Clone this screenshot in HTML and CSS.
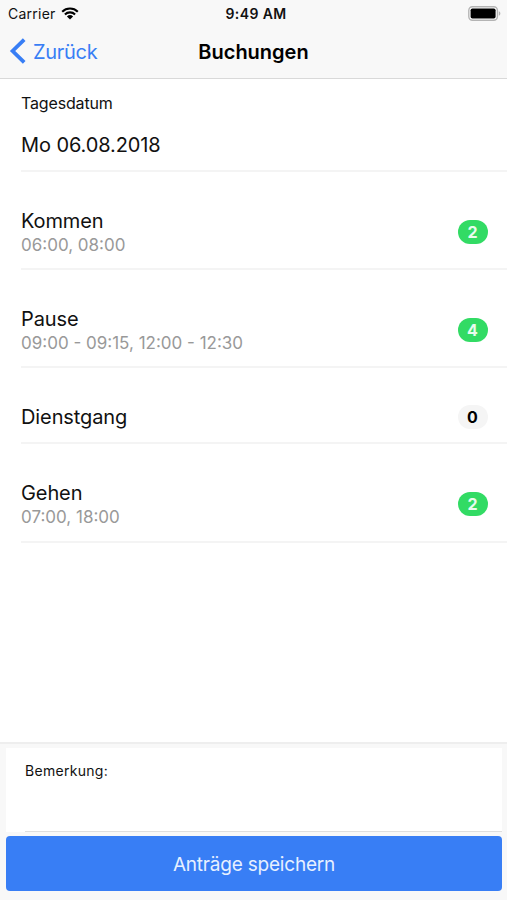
FILE: index.html
```
<!DOCTYPE html>
<html lang="de">
<head>
  <meta charset="UTF-8">
  <title>Buchungen</title>
  <meta name="viewport" content="width=device-width, initial-scale=1">
  <link rel="stylesheet" href="styles.css">
</head>
<body>
  <div class="page">
    <!-- Kopfbereich -->
    <header class="header">
      <div class="statusbar">
        <div class="carrier">
          <span class="carrier-name">Carrier</span>
          <svg class="wifi" width="18" height="13" viewBox="0 0 18 13">
            <path d="M1.2 4.7a11.2 11.2 0 0 1 15.6 0M3.9 7.5a7.3 7.3 0 0 1 10.2 0" fill="none" stroke="#000" stroke-width="2.1"/>
            <path d="M5.9 9.4a4.5 4.5 0 0 1 6.2 0L9 12.6z"/>
          </svg>
        </div>
        <span class="time">9:49 AM</span>
        <svg class="battery" width="33" height="16" viewBox="0 0 33 16">
          <rect x=".8" y=".8" width="28.6" height="13.4" rx="3.6" fill="#fff" stroke="#b4b4b4" stroke-width="1.4"/>
          <rect x="2.6" y="2.5" width="25" height="10" rx="1.8"/>
          <path d="M30.8 5.2v4.6q1.6-.6 1.6-2.3t-1.6-2.3z" fill="#b4b4b4"/>
        </svg>
      </div>
      <nav class="navbar">
        <a class="back" href="#">
          <svg class="chevron" width="17" height="26" viewBox="0 0 17 26">
            <path d="M15.2 1.6L3.6 13l11.6 11.4" fill="none" stroke="#387ef5" stroke-width="3.8"/>
          </svg>
          <span class="back-text">Zurück</span>
        </a>
        <h1 class="title">Buchungen</h1>
      </nav>
    </header>

    <!-- Liste der Buchungen -->
    <main class="list">
      <div class="item item-date">
        <label class="date-label">Tagesdatum</label>
        <div class="item-title date-value">Mo 06.08.2018</div>
      </div>
      <div class="item">
        <div>
          <h2 class="item-title">Kommen</h2>
          <p class="item-note">06:00, 08:00</p>
        </div>
        <span class="badge badge-green">2</span>
      </div>
      <div class="item">
        <div>
          <h2 class="item-title">Pause</h2>
          <p class="item-note">09:00 - 09:15, 12:00 - 12:30</p>
        </div>
        <span class="badge badge-green">4</span>
      </div>
      <div class="item item-small">
        <h2 class="item-title">Dienstgang</h2>
        <span class="badge">0</span>
      </div>
      <div class="item item-last">
        <div>
          <h2 class="item-title">Gehen</h2>
          <p class="item-note">07:00, 18:00</p>
        </div>
        <span class="badge badge-green">2</span>
      </div>
    </main>

    <!-- Fußbereich -->
    <footer class="footer">
      <div class="remark">
        <div class="remark-inner">Bemerkung:</div>
      </div>
      <button class="btn-save">Anträge speichern</button>
    </footer>
  </div>
</body>
</html>
```

FILE: styles.css
```
* {
  box-sizing: border-box;
}
body {
  margin: 0;
  font-family: Inter, "Liberation Sans", sans-serif;
  color: #111;
  background-color: #fff;
}
h1, h2, p {
  margin: 0;
  font-weight: 400;
}
.page {
  display: flex;
  flex-direction: column;
  height: 900px;
}

/* Kopfbereich */
.header {
  height: 79px;
  background-color: #f8f8f8;
  border-bottom: 1px solid #d9d9d9;
}
.statusbar {
  display: grid;
  grid-template-columns: 1fr auto 1fr;
  align-items: center;
  height: 27px;
  padding: 0 6px 0 8px;
}
.carrier {
  display: flex;
  align-items: center;
  gap: 5px;
}
.carrier-name {
  font-size: 14px;
  letter-spacing: 0.25px;
}
.time {
  padding-left: 3px;
  font-size: 14px;
  font-weight: 600;
  letter-spacing: 0.4px;
}
.battery {
  justify-self: end;
}
.navbar {
  display: grid;
  grid-template-columns: 1fr auto 1fr;
  align-items: center;
  height: 50px;
  padding: 0 9px;
}
.back {
  display: flex;
  align-items: center;
  gap: 7px;
  color: #387ef5;
  text-decoration: none;
}
.chevron {
  margin-bottom: 3px;
}
.back-text {
  font-size: 20px;
  letter-spacing: -0.3px;
}
.title {
  font-size: 20px;
  font-weight: 600;
  color: #000;
}

/* Liste */
.list {
  flex: 1;
  padding-left: 21px;
}
.item {
  display: flex;
  align-items: center;
  justify-content: space-between;
  height: 98px;
  padding: 24px 19.5px 0 0;
  border-bottom: 2px solid #f4f4f4;
}
.item-date {
  flex-direction: column;
  align-items: flex-start;
  justify-content: flex-start;
  height: 93px;
  padding-top: 14px;
}
.item-small {
  height: 76px;
}
.item-last {
  height: 99px;
  padding-top: 23px;
}
.date-label {
  font-size: 16px;
  line-height: 20px;
  letter-spacing: -0.15px;
}
.date-value {
  margin-top: 19px;
}
.item-title {
  font-size: 20px;
  line-height: 26px;
  letter-spacing: -0.1px;
}
.item-note {
  font-size: 17px;
  line-height: 23px;
  color: #999;
}
.badge {
  width: 30px;
  height: 24px;
  border-radius: 12px;
  background-color: #f5f5f5;
  color: #000;
  font-size: 16px;
  font-weight: 700;
  line-height: 24px;
  text-align: center;
}
.badge-green {
  background-color: #32db64;
  color: #e9fbee;
}

/* Fußbereich */
.footer {
  height: 158px;
  padding: 4px 5px 0 6px;
  background-color: #f8f8f8;
  border-top: 2px solid #eee;
}
.remark {
  height: 84px;
  padding-left: 19px;
  background-color: #fff;
}
.remark-inner {
  height: 84px;
  padding-top: 14px;
  border-bottom: 1px solid #dedede;
  font-size: 14px;
  line-height: 18px;
  letter-spacing: 0.3px;
}
.btn-save {
  display: block;
  width: 100%;
  height: 55px;
  margin-top: 4px;
  padding: 2px 0 0;
  border: none;
  border-radius: 4px;
  background-color: #387ef5;
  color: #e6f0ff;
  font-family: inherit;
  font-size: 19px;
  letter-spacing: -0.2px;
}
```
